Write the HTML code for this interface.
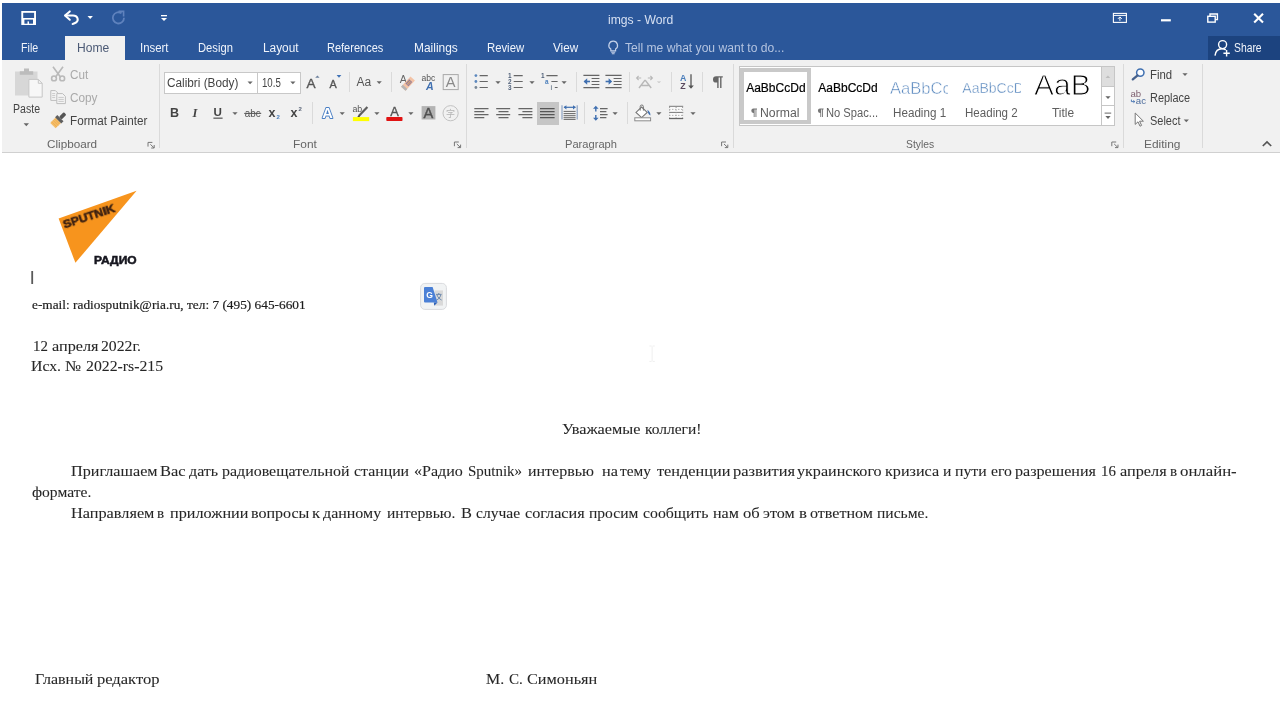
<!DOCTYPE html>
<html lang="ru">
<head>
<meta charset="utf-8">
<title>imgs - Word</title>
<style>
*{margin:0;padding:0;box-sizing:border-box}
html,body{width:1280px;height:719px;overflow:hidden;background:#fff}
body{position:relative;font-family:"Liberation Sans",sans-serif;font-size:12px;color:#444}
#titlebar{position:absolute;left:2px;top:3px;width:1278px;height:57px;background:#2b579a}
#share{position:absolute;left:1208px;top:36px;width:72px;height:24px;background:#1c437f}
#ribbon{position:absolute;left:2px;top:60px;width:1278px;height:93px;background:#f1f1f1;border-bottom:1px solid #d0d0d0}
#hometab{position:absolute;left:64.5px;top:36px;width:60.2px;height:25px;background:#f1f1f1}
.tab{position:absolute;top:41px;color:#fff;font-size:12px;line-height:14px;white-space:nowrap;transform-origin:0 50%}
.t{position:absolute;white-space:nowrap;line-height:14px;font-size:12px;color:#444;transform-origin:0 50%}
.dis{color:#a9a9a9}
.gl{color:#666}
.gal{color:#5e5e5e}
.doc{position:absolute;white-space:pre;font-family:"Liberation Serif",serif;color:#262626;font-size:16px;line-height:18px;-webkit-text-stroke:0.08px #262626}
#root{position:absolute;left:0;top:0;width:1280px;height:719px;will-change:transform;overflow:hidden}
.w{position:absolute;top:0;white-space:pre;transform-origin:0 14.4px}
svg{position:absolute;left:0;top:0;overflow:visible}
.box{position:absolute;background:#fff;border:1px solid #c8c8c8}
</style>
</head>
<body>
<div id="root">
<div id="titlebar"></div>
<div id="share"></div>
<div id="hometab"></div>
<div id="ribbon"></div>
<!-- title + tabs -->
<div class="tab" id="wtitle" style="left:607.6px;top:12.6px;color:#d6e0f2;transform:scaleX(1.012)">imgs - Word</div>
<div class="tab" id="tFile" style="left:21.4px;top:41px;color:#f0f4fb;transform:scaleX(0.890)">File</div>
<div class="tab" id="tHome" style="left:77.4px;top:41px;color:#4c5a75;transform:scaleX(1.006)">Home</div>
<div class="tab" id="tInsert" style="left:139.5px;top:41px;color:#f0f4fb;transform:scaleX(0.950)">Insert</div>
<div class="tab" id="tDesign" style="left:197.6px;top:41px;color:#f0f4fb;transform:scaleX(0.934)">Design</div>
<div class="tab" id="tLayout" style="left:262.5px;top:41px;color:#f0f4fb;transform:scaleX(0.988)">Layout</div>
<div class="tab" id="tRef" style="left:327.3px;top:41px;color:#f0f4fb;transform:scaleX(0.917)">References</div>
<div class="tab" id="tMail" style="left:413.6px;top:41px;color:#f0f4fb;transform:scaleX(0.995)">Mailings</div>
<div class="tab" id="tReview" style="left:487.4px;top:41px;color:#f0f4fb;transform:scaleX(0.943)">Review</div>
<div class="tab" id="tView" style="left:553.0px;top:41px;color:#f0f4fb;transform:scaleX(0.973)">View</div>
<div class="tab" id="tTell" style="left:625.0px;top:41px;color:#b4c4e0;transform:scaleX(1.008)">Tell me what you want to do...</div>
<div class="tab" id="tShare" style="left:1234.1px;top:41px;color:#f0f4fb;transform:scaleX(0.862)">Share</div>
<!-- boxes & separators -->
<div class="box" style="left:164px;top:72px;width:94px;height:22px"></div>
<div class="box" style="left:257px;top:72px;width:44px;height:22px"></div>
<div class="box" id="gallery" style="left:739px;top:66px;width:376px;height:60px;border-color:#c6c6c6"></div>
<div style="position:absolute;left:740px;top:68px;width:71px;height:56px;border:4px solid #c9c9c9;background:#fff"></div>
<div style="position:absolute;left:1101px;top:67px;width:13px;height:20px;background:#dedede;border-left:1px solid #c6c6c6;border-bottom:1px solid #c6c6c6"></div>
<div style="position:absolute;left:1101px;top:87px;width:13px;height:19px;border-left:1px solid #c6c6c6;border-bottom:1px solid #c6c6c6"></div>
<div style="position:absolute;left:1101px;top:106px;width:13px;height:19px;border-left:1px solid #c6c6c6"></div>
<div style="position:absolute;left:537px;top:102px;width:22px;height:23px;background:#c6c6c6"></div>
<!-- separators -->
<div style="position:absolute;left:158.5px;top:64px;width:1px;height:84px;background:#dadada"></div>
<div style="position:absolute;left:465.5px;top:64px;width:1px;height:84px;background:#dadada"></div>
<div style="position:absolute;left:733px;top:64px;width:1px;height:84px;background:#dadada"></div>
<div style="position:absolute;left:1123px;top:64px;width:1px;height:84px;background:#dadada"></div>
<div style="position:absolute;left:1201.5px;top:64px;width:1px;height:84px;background:#dadada"></div>
<div style="position:absolute;left:348.5px;top:72px;width:1px;height:20px;background:#dadada"></div>
<div style="position:absolute;left:390.5px;top:72px;width:1px;height:20px;background:#dadada"></div>
<div style="position:absolute;left:575.5px;top:72px;width:1px;height:20px;background:#dadada"></div>
<div style="position:absolute;left:628.5px;top:72px;width:1px;height:20px;background:#dadada"></div>
<div style="position:absolute;left:670.5px;top:72px;width:1px;height:20px;background:#dadada"></div>
<div style="position:absolute;left:701.5px;top:72px;width:1px;height:20px;background:#dadada"></div>
<div style="position:absolute;left:311.5px;top:102px;width:1px;height:22px;background:#dadada"></div>
<div style="position:absolute;left:584px;top:102px;width:1px;height:22px;background:#dadada"></div>
<div style="position:absolute;left:626.5px;top:102px;width:1px;height:22px;background:#dadada"></div>
<!-- ribbon text -->
<div class="t " style="left:13.0px;top:102px;transform:scaleX(0.880)">Paste</div>
<div class="t dis" style="left:70.0px;top:67.5px;transform:scaleX(0.975)">Cut</div>
<div class="t dis" style="left:70.0px;top:90.6px;transform:scaleX(0.982)">Copy</div>
<div class="t " style="left:70.0px;top:113.5px;transform:scaleX(0.974)">Format Painter</div>
<div class="t gl" style="left:46.9px;top:136.7px;font-size:11px;transform:scaleX(1.064)">Clipboard</div>
<div class="t " style="left:166.9px;top:76px;transform:scaleX(0.981)">Calibri (Body)</div>
<div class="t " style="left:261.7px;top:76px;transform:scaleX(0.805)">10.5</div>
<div class="t gl" style="left:293.0px;top:136.7px;font-size:11px;transform:scaleX(1.081)">Font</div>
<div class="t gl" style="left:564.8px;top:136.7px;font-size:11px;transform:scaleX(1.012)">Paragraph</div>
<div class="t gl" style="left:906.0px;top:136.7px;font-size:11px;transform:scaleX(0.938)">Styles</div>
<div class="t gl" style="left:1143.8px;top:136.7px;font-size:11px;transform:scaleX(1.085)">Editing</div>
<div class="t " style="left:1150.1px;top:67.5px;transform:scaleX(0.947)">Find</div>
<div class="t " style="left:1150.1px;top:91px;transform:scaleX(0.911)">Replace</div>
<div class="t " style="left:1150.1px;top:113.5px;transform:scaleX(0.914)">Select</div>
<div class="t gal" style="left:759.8px;top:106px;transform:scaleX(1.019)">Normal</div>
<div class="t gal" style="left:825.9px;top:106px;transform:scaleX(0.930)">No Spac...</div>
<div class="t gal" style="left:892.7px;top:106px;transform:scaleX(0.971)">Heading 1</div>
<div class="t gal" style="left:965.1px;top:106px;transform:scaleX(0.963)">Heading 2</div>
<div class="t gal" style="left:1052.0px;top:106px;transform:scaleX(0.994)">Title</div>
<!-- styles gallery samples -->
<div class="t" style="left:746.2px;top:81px;color:#000;font-size:12px;-webkit-text-stroke:0.2px #000">AaBbCcDd</div>
<div class="t" style="left:818.3px;top:81px;color:#000;font-size:12px;-webkit-text-stroke:0.2px #000">AaBbCcDd</div>
<div style="position:absolute;left:888px;top:74px;width:60.2px;height:26px;overflow:hidden"><div class="t" style="left:2px;top:5.4px;font-size:16.6px;line-height:20px;color:#5585bd;-webkit-text-stroke:0.5px #fff">AaBbCc</div></div>
<div style="position:absolute;left:960px;top:74px;width:60.6px;height:26px;overflow:hidden"><div class="t" style="left:2.3px;top:5px;font-size:14px;line-height:18px;color:#5585bd;-webkit-text-stroke:0.4px #fff">AaBbCcDd</div></div>
<div style="position:absolute;left:1030px;top:74.8px;width:62px;height:26px;overflow:hidden"><div class="t" style="left:4.2px;top:-6.3px;font-size:30.2px;line-height:32px;color:#000;-webkit-text-stroke:1px #fff;transform:scaleX(0.992)">AaB</div></div>
<!-- icons: title bar -->
<svg width="1280" height="719" viewBox="0 0 1280 719">
<!-- save -->
<rect x="21.3" y="11" width="14.7" height="14" fill="#fff"/>
<rect x="23.2" y="12.8" width="10.9" height="5.2" fill="#2b579a"/>
<rect x="24.4" y="19.6" width="8.6" height="4.1" fill="#2b579a"/>
<rect x="27.5" y="21.4" width="1.5" height="3.6" fill="#fff"/>
<!-- undo -->
<path d="M65.5 15.6H73C77.8 15.6 79 20.3 76.2 22.4C75 23.3 74 23.7 72.6 24" fill="none" stroke="#fff" stroke-width="2" stroke-linecap="round"/>
<path d="M69.8 11.4L65 15.6L69.8 19.8" fill="none" stroke="#fff" stroke-width="2" stroke-linecap="round" stroke-linejoin="round"/>
<path d="M87.5 16h5.4l-2.7 3z" fill="#fff"/>
<!-- redo (disabled) -->
<path d="M121.5 13.2A5.6 5.6 0 1 0 124 17.8" fill="none" stroke="#5f82bd" stroke-width="1.8"/>
<path d="M118.6 11.4h5v5" fill="none" stroke="#5f82bd" stroke-width="1.6"/>
<!-- qat customize -->
<rect x="161" y="15" width="6" height="1.3" fill="#fff"/>
<path d="M161 18h6l-3 3z" fill="#fff"/>
<!-- lightbulb -->
<path d="M613.2 41.2a4.3 4.3 0 0 0-2.4 7.9v1.7h4.8v-1.7a4.3 4.3 0 0 0-2.4-7.9z" fill="none" stroke="#c3d0e8" stroke-width="1.2"/>
<path d="M611.2 52.2h4M611.8 53.8h2.8" stroke="#c3d0e8" stroke-width="1.1" fill="none"/>
<!-- ribbon display options -->
<rect x="1113.4" y="13.4" width="13" height="9" fill="none" stroke="#fff" stroke-width="1.1"/>
<path d="M1113.4 15.4h13" stroke="#fff" stroke-width="1"/>
<path d="M1119.9 20.8v-3.6M1118 18.8l1.9-1.9l1.9 1.9" stroke="#fff" stroke-width="1" fill="none"/>
<!-- minimize -->
<rect x="1161" y="19.2" width="9.8" height="2.2" fill="#fff"/>
<!-- restore -->
<rect x="1207.8" y="16.3" width="7.4" height="5.8" fill="none" stroke="#fff" stroke-width="1.4"/>
<path d="M1210 16v-2h7.4v5.6h-2" fill="none" stroke="#fff" stroke-width="1.4"/>
<!-- close -->
<path d="M1254.2 13.8l8.8 8.8M1263 13.8l-8.8 8.8" stroke="#fff" stroke-width="2.1"/>
<!-- share person -->
<circle cx="1222.6" cy="44.6" r="4" fill="none" stroke="#fff" stroke-width="1.4"/>
<path d="M1215 55.6c0.6-4.6 3.4-6.8 7-6.8c1.6 0 2.8 0.4 3.8 1" fill="none" stroke="#fff" stroke-width="1.4"/>
<path d="M1226.6 50v6.4M1223.4 53.2h6.4" stroke="#fff" stroke-width="1.4"/>
<!-- collapse ribbon -->
<path d="M1262.8 146l4.2-4l4.2 4" fill="none" stroke="#555" stroke-width="1.7"/>
</svg>
<!-- icons: clipboard -->
<svg width="1280" height="719" viewBox="0 0 1280 719">
<!-- paste (disabled) -->
<rect x="15" y="71.5" width="22.5" height="24" fill="#d7d7d7"/>
<path d="M19.8 74.8v-3.6h4.2v-2.8h5v2.8h4.2v3.6z" fill="#bcbcbc"/>
<path d="M28.9 79.4h9.4l3.9 3.9v13.8h-13.3z" fill="#f7f7f7" stroke="#c6c6c6" stroke-width="1"/>
<path d="M38.3 79.4v3.9h3.9" fill="none" stroke="#c6c6c6" stroke-width="1"/>
<path d="M23.6 123.3h5.4l-2.7 3z" fill="#666"/>
<!-- cut (disabled) -->
<g fill="none" stroke="#b9b9b9" stroke-width="1.6">
<path d="M53 66.8l7.6 10.4M63 66.8l-7.6 10.4"/>
<circle cx="54" cy="78.4" r="2.4"/>
<circle cx="62.2" cy="78.4" r="2.4"/>
</g>
<!-- copy (disabled) -->
<g fill="#f4f4f4" stroke="#bdbdbd" stroke-width="1">
<path d="M50.8 90.6h4.6l2.4 2.4v7.4h-7z"/>
<path d="M56.8 93.6h5.8l2.8 2.8v7.2h-8.6z"/>
</g>
<path d="M52.2 93.6h3M52.2 95.6h3M52.2 97.6h3M58.4 97.4h5.4M58.4 99.4h5.4M58.4 101.4h5.4" stroke="#c4c4c4" stroke-width="0.9"/>
<!-- format painter -->
<g transform="rotate(-45 58.5 120)">
<rect x="50.6" y="116.2" width="7.6" height="7.6" fill="#f4bd68"/>
<path d="M52.4 116.2v7.6M54.4 116.2v7.6M56.4 116.2v7.6" stroke="#eaa548" stroke-width="0.6"/>
<rect x="58" y="115.6" width="3.2" height="8.8" fill="#5f5f5f"/>
<rect x="61.2" y="118.2" width="6.6" height="3.6" rx="1" fill="#555"/>
</g>
<!-- launcher clipboard -->
<g id="launcher" fill="none" stroke="#777" stroke-width="1">
<path d="M148 146.6v-4.2h4.4"/>
<path d="M150.4 144.4l3.6 3.4M154.2 145v3h-3"/>
</g>
<use href="#launcher" x="306.4" y="-0.4"/>
<use href="#launcher" x="573.6" y="-0.4"/>
<use href="#launcher" x="963.8" y="-0.4"/>
</svg>
<!-- icons: font group -->
<svg width="1280" height="719" viewBox="0 0 1280 719" font-family="Liberation Sans, sans-serif">
<defs><path id="dd" d="M0 0h5.2l-2.6 2.8z" fill="#666"/></defs>
<use href="#dd" x="247.5" y="81.4"/>
<use href="#dd" x="290.3" y="81.4"/>
<!-- B I U abc x2 x2 -->
<text x="170" y="116.8" font-size="12.5" font-weight="bold" fill="#444">B</text>
<text x="192.6" y="116.8" font-size="12.5" font-style="italic" font-weight="bold" font-family="Liberation Serif, serif" fill="#444">I</text>
<text x="213.6" y="116.2" font-size="11.6" font-weight="bold" fill="#444">U</text>
<rect x="213.4" y="117.6" width="9.2" height="1.1" fill="#444"/>
<use href="#dd" x="232.4" y="112.2"/>
<text x="244.8" y="116.6" font-size="10.4" fill="#555" textLength="15.8" lengthAdjust="spacingAndGlyphs">abc</text>
<rect x="244.2" y="112.9" width="17" height="1" fill="#555"/>
<text x="268.6" y="116.8" font-size="12.5" font-weight="bold" fill="#444">x</text>
<text x="276.4" y="118.8" font-size="6" font-weight="bold" fill="#4a7ebb">2</text>
<text x="290.6" y="116.8" font-size="12.5" font-weight="bold" fill="#444">x</text>
<text x="298.4" y="111.4" font-size="6" font-weight="bold" fill="#5a6478">2</text>
<!-- grow / shrink -->
<text x="306.4" y="87.9" font-size="13.6" fill="#555" stroke="#555" stroke-width="0.35">A</text>
<path d="M315.2 77.8l2.2-2.4l2.2 2.4z" fill="#6b7f9c"/>
<text x="329.6" y="87.9" font-size="10.8" fill="#555" stroke="#555" stroke-width="0.35">A</text>
<path d="M336.6 75.1h4.8l-2.4 2.6z" fill="#3f72b6"/>
<!-- Aa -->
<text x="356.6" y="86" font-size="12" fill="#555">Aa</text>
<use href="#dd" x="376.6" y="81.2"/>
<!-- clear formatting -->
<text x="399.8" y="82.8" font-size="10.6" fill="#666">A</text>
<g transform="rotate(-48 408 83.6)">
<rect x="401" y="80.6" width="14" height="6" fill="#f3c3a6"/>
<rect x="401" y="80.6" width="2.6" height="6" fill="#b5b5b5"/>
<rect x="406.4" y="81.6" width="5.6" height="4" fill="#8d7aa3"/>
<path d="M407.8 81.6v4M409.2 81.6v4M410.6 81.6v4M406.4 83.6h5.6" stroke="#f0b060" stroke-width="0.6"/>
</g>
<!-- phonetic guide -->
<text x="421.4" y="80.8" font-size="8.6" fill="#555" textLength="13.8" lengthAdjust="spacingAndGlyphs">abc</text>
<text x="426" y="89.8" font-size="10.6" font-weight="bold" font-style="italic" fill="#3f6fb0">A</text>
<!-- char border -->
<rect x="443.2" y="74.6" width="15" height="15" fill="none" stroke="#a8a8a8" stroke-width="1"/>
<text x="445.7" y="87" font-size="14.6" fill="#8a8a8a">A</text>
<!-- text effects -->
<text x="322.2" y="117.6" font-size="14.6" font-weight="bold" fill="#fff" stroke="#4a7fc4" stroke-width="1.9" stroke-linejoin="round" style="paint-order:stroke">A</text>
<use href="#dd" x="339.6" y="112.2"/>
<!-- highlight -->
<text x="352.4" y="111.6" font-size="8.8" fill="#555">ab</text>
<path d="M367.4 107l-8.6 9" stroke="#5e5e5e" stroke-width="2.2"/>
<path d="M359.4 114.8l-2.2 2.2h2.6z" fill="#444"/>
<rect x="352.9" y="117.1" width="16.3" height="4" fill="#ffff00"/>
<use href="#dd" x="374.3" y="112.2"/>
<!-- font colour -->
<text x="390.2" y="116.4" font-size="12.8" fill="#555" stroke="#555" stroke-width="0.35">A</text>
<rect x="386.3" y="117" width="16.2" height="4.1" rx="0.8" fill="#e01313"/>
<use href="#dd" x="408.3" y="112.2"/>
<!-- char shading -->
<rect x="421.6" y="106.1" width="13.8" height="13.4" fill="#b3b3b3"/>
<text x="423.6" y="117.9" font-size="14.6" fill="#505050" stroke="#505050" stroke-width="0.4">A</text>
<!-- enclosed char (disabled) -->
<circle cx="450.6" cy="113.2" r="7.6" fill="none" stroke="#c2c2c2" stroke-width="1"/>
<text x="446.1" y="116.8" font-size="9" fill="#b5b5b5" font-family="Noto Sans CJK SC, WenQuanYi Zen Hei, sans-serif">字</text>
</svg>
<!-- icons: paragraph group -->
<svg width="1280" height="719" viewBox="0 0 1280 719" font-family="Liberation Sans, sans-serif">
<!-- bullets -->
<g fill="#5c88be"><circle cx="475.9" cy="75.6" r="1.4"/><circle cx="475.9" cy="81.5" r="1.4"/><circle cx="475.9" cy="87.5" r="1.4" fill="#7a8896"/></g>
<path d="M479.6 75.6h8.2M479.6 81.5h8.2M479.6 87.5h8.2" stroke="#666" stroke-width="1.2"/>
<use href="#dd" x="495.4" y="81.2"/>
<!-- numbering -->
<g font-size="6.4" font-weight="bold" fill="#4f5f78"><text x="508" y="78">1</text><text x="508" y="83.9">2</text><text x="508" y="89.8">3</text></g>
<path d="M513.7 75.6h9M513.7 81.5h9M513.7 87.5h9" stroke="#666" stroke-width="1.2"/>
<use href="#dd" x="529.4" y="81.2"/>
<!-- multilevel -->
<g font-size="6.4" font-weight="bold"><text x="541" y="78" fill="#4f5f78">1</text><text x="545" y="83.9" fill="#4a7ebb">a</text><text x="550.4" y="89.8" fill="#7a8896">i</text></g>
<path d="M546.4 75.6h11.2M551.4 81.5h6.2M554.8 87.5h2.8" stroke="#666" stroke-width="1.2"/>
<use href="#dd" x="561.5" y="81.2"/>
<!-- decrease indent -->
<path d="M583.4 75.4h16M591.6 78.5h7.8M591.6 81.5h7.8M591.6 84.5h7.8M583.4 87.6h16" stroke="#666" stroke-width="1.2"/>
<path d="M590 81.5h-5.4" stroke="#3f6fb0" stroke-width="1.6"/><path d="M587.2 78.3l-3.6 3.2l3.6 3.2z" fill="#3f6fb0"/>
<!-- increase indent -->
<path d="M605.4 75.4h16.2M613.6 78.5h8M613.6 81.5h8M613.6 84.5h8M605.4 87.6h16.2" stroke="#666" stroke-width="1.2"/>
<path d="M605.6 81.5h5" stroke="#3f6fb0" stroke-width="1.6"/><path d="M608.6 78.3l3.6 3.2l-3.6 3.2z" fill="#3f6fb0"/>
<!-- asian layout (disabled) -->
<g stroke="#b8b8b8" fill="none">
<path d="M639 88l5.8-7.6h0.6l5.8 7.6M641.6 85.4h7" stroke-width="1.5"/>
<path d="M636.6 78h4.6M638.6 76l-2 2l2 2M652.4 78h-4.6M650.4 76l2 2l-2 2" stroke-width="1.1"/>
</g>
<path d="M656.8 81.4h4.4l-2.2 1.6z" fill="#c4c4c4"/>
<!-- sort -->
<text x="680" y="80.6" font-size="8.8" font-weight="bold" fill="#4a7ebb">A</text>
<text x="680.2" y="88.8" font-size="8.8" font-weight="bold" fill="#5a4a5e">Z</text>
<path d="M691 74.2v13.6" stroke="#555" stroke-width="1.3"/><path d="M688.2 85.6l2.8 3.2l2.8-3.2z" fill="#555"/>
<!-- pilcrow -->
<path d="M716.2 76.2h6.6v1.3h-1.3v10.5h-1.4v-10.5h-1.5v10.5h-1.4v-5.4h-1a3.2 3.2 0 0 1 0-6.4z" fill="#666"/>
<!-- align left/center/right/justify -->
<path d="M474.3 108.6h14.2M474.3 111.6h10M474.3 114.6h14.2M474.3 117.6h10" stroke="#666" stroke-width="1.2"/>
<path d="M496.2 108.6h14M498.5 111.6h10M496.2 114.6h14M498.5 117.6h10" stroke="#666" stroke-width="1.2"/>
<path d="M518.4 108.6h14M522.4 111.6h10M518.4 114.6h14M522.4 117.6h10" stroke="#666" stroke-width="1.2"/>
<path d="M540 108.6h14.6M540 111.6h14.6M540 114.6h14.6M540 117.6h14.6" stroke="#555" stroke-width="1.2"/>
<!-- distributed -->
<path d="M562 105.2v14.4M577.2 105.2v14.4" stroke="#8ea3c4" stroke-width="1.2"/>
<path d="M564 107.3h11.4" stroke="#3f6fb0" stroke-width="1.2"/><path d="M566.4 105.2l-2.8 2.1l2.8 2.1zM573 105.2l2.8 2.1l-2.8 2.1z" fill="#3f6fb0"/>
<path d="M563.6 111.4h12M563.6 113.6h12M563.6 115.7h12M563.6 117.7h12M563.6 119.4h12" stroke="#666" stroke-width="1"/>
<!-- line spacing -->
<path d="M595.8 107v4.6M595.8 115v4.6" stroke="#3f6fb0" stroke-width="1.4"/>
<path d="M593 108.8l2.8-3l2.8 3zM593 117.8l2.8 3l2.8-3z" fill="#3f6fb0"/>
<path d="M600 108.6h7.6M600 111.6h6.4M600 114.6h7.6M600 117.6h6.4" stroke="#666" stroke-width="1.2"/>
<use href="#dd" x="612.5" y="112.2"/>
<!-- shading -->
<path d="M641.6 107l5.6 5.4l-5.6 5.2l-5.6-5.2z" fill="#fff" stroke="#777" stroke-width="1.1"/>
<path d="M640.2 110.6v-4a1.6 1.6 0 0 1 3.2 0v4" fill="none" stroke="#777" stroke-width="1"/>
<path d="M647.4 109.8c2 1.4 3.2 3.4 3 5.8c-1.6-0.6-2.6-2.4-3-5.8z" fill="#3f6fb0"/>
<rect x="634.8" y="117.8" width="15.8" height="3" fill="#fff" stroke="#8a8a8a" stroke-width="1"/>
<use href="#dd" x="656.3" y="112.2"/>
<!-- borders -->
<rect x="669" y="105.8" width="14" height="13" fill="#fafafa"/>
<path d="M669 106.3h14.2M669 112.4h14.2" stroke="#777" stroke-width="1"/><path d="M669 118.5h14.2" stroke="#666" stroke-width="1.3"/>
<path d="M669.6 107v11M676.1 107v11M682.6 107v11" stroke="#999" stroke-width="1" stroke-dasharray="1 1.6"/>
<path d="M669 109.4h14M669 115.4h14" stroke="#aaa" stroke-width="0.9" stroke-dasharray="1.4 1.6"/>
<use href="#dd" x="690.4" y="112.2"/>
</svg>
<!-- icons: styles + editing -->
<svg width="1280" height="719" viewBox="0 0 1280 719" font-family="Liberation Sans, sans-serif">
<!-- pilcrows in gallery -->
<path id="pil" d="M753.6 108.6h3.4v0.9h-0.6v7.6h-0.9v-7.6h-0.9v7.6h-0.9v-4.2h-0.4a2.1 2.1 0 0 1 0.3-4.3z" fill="#777"/>
<use href="#pil" x="66.6"/>
<!-- gallery scroll arrows -->
<path d="M1105.6 78h4.6l-2.3-2.4z" fill="#bdbdbd"/>
<path d="M1105.4 96.2h5.2l-2.6 2.8z" fill="#666"/>
<rect x="1104.6" y="112.6" width="6.6" height="1" fill="#666"/>
<path d="M1105.4 116.1h5.2l-2.6 2.8z" fill="#666"/>
<!-- find -->
<circle cx="1140.3" cy="72.6" r="3.7" fill="#fafcff" stroke="#3f6fb0" stroke-width="1.5"/>
<path d="M1137.6 75.4l-4.8 4" stroke="#46618c" stroke-width="2.3" stroke-linecap="round"/>
<use href="#dd" x="1182.4" y="73.3"/>
<!-- replace -->
<text x="1130.4" y="97" font-size="9.6" fill="#7e6070">ab</text>
<text x="1135.8" y="103.9" font-size="9.6" fill="#4a6a9a">ac</text>
<path d="M1131.4 99.6v2h3.2M1133.4 100.4l1.4 1.2l-1.4 1.2" fill="none" stroke="#3f6fb0" stroke-width="0.9"/>
<!-- select -->
<path d="M1135.2 113v11.4l2.8-2.6l2 4.4l1.6-0.8l-2-4.2h3.8z" fill="#fff" stroke="#777" stroke-width="1" stroke-linejoin="round"/>
<use href="#dd" x="1183.7" y="119.4"/>
</svg>
<!-- document graphics: logo, caret, translate badge -->
<svg width="1280" height="719" viewBox="0 0 1280 719" font-family="Liberation Sans, sans-serif">
<path d="M136.6 190.8L58.6 218.6L75.4 262.8z" fill="#f7941d"/>
<g transform="translate(64.6 228.5) rotate(-18.4)"><text x="0" y="0" font-size="10.4" font-weight="bold" fill="#3a1f10" stroke="#3a1f10" stroke-width="0.55" textLength="54" lengthAdjust="spacingAndGlyphs">SPUTNIK</text></g>
<text x="94" y="264" font-size="10.4" font-weight="bold" fill="#16161f" stroke="#16161f" stroke-width="0.5" textLength="42.6" lengthAdjust="spacingAndGlyphs">РАДИО</text>
<rect x="31.3" y="271" width="1.8" height="13" fill="#5a5a5a"/>
<path d="M649.4 346h2.2M652.6 346h2.2M652.1 346.4v14.6M649.4 361.4h2.2M652.6 361.4h2.2" stroke="#efefef" stroke-width="1" fill="none"/>
<!-- translate badge -->
<rect x="420.6" y="283.4" width="25.8" height="26" rx="4.2" fill="#f1f3f4" stroke="#d9dbde" stroke-width="1"/>
<rect x="434.6" y="290.4" width="8.4" height="15.2" fill="#d9d9d9"/>
<path d="M436 294.4h5.6M438.8 293v1.4M437 295c0.8 2.2 2.4 4 4.6 5M440.8 295c-0.6 2.4-2.2 4.2-4.6 5.2" fill="none" stroke="#5f7fa8" stroke-width="0.9"/>
<path d="M424 288a1 1 0 0 1 1-1h7.6l4.9 15.5h-12.5a1 1 0 0 1-1-1z" fill="#4b80d6"/>
<path d="M433.8 302.5h3.7l-3.3 3.3z" fill="#2f62b8"/>
<text x="426.3" y="298.2" font-size="8.6" font-weight="bold" fill="#fff">G</text>
</svg>
<!-- DOCUMENT TEXT -->
<div class="doc" id="d1" style="left:32.2px;top:297px;font-size:13.33px;line-height:16px;color:#1c1c1c;-webkit-text-stroke:0.2px #1c1c1c;transform-origin:0 12.6px;transform:scale(0.9991,0.96)">e-mail: radiosputnik@ria.ru, тел: 7 (495) 645-6601</div>
<div class="doc" id="d5" style="left:0;top:461.6px;width:1280px;height:18px">
<span class="w" style="left:71.0px;transform:scale(1.011,0.96)">Приглашаем</span>
<span class="w" style="left:159.9px;transform:scale(1.026,0.96)">Вас</span>
<span class="w" style="left:189.2px;transform:scale(0.999,0.96)">дать</span>
<span class="w" style="left:222.0px;transform:scale(0.997,0.96)">радиовещательной</span>
<span class="w" style="left:354.2px;transform:scale(0.990,0.96)">станции</span>
<span class="w" style="left:414.0px;transform:scale(1.004,0.96)">«Радио</span>
<span class="w" style="left:467.6px;transform:scale(0.936,0.96)">Sputnik»</span>
<span class="w" style="left:528.3px;transform:scale(0.998,0.96)">интервью</span>
<span class="w" style="left:601.5px;transform:scale(1.016,0.96)">на</span>
<span class="w" style="left:619.6px;transform:scale(0.958,0.96)">тему</span>
<span class="w" style="left:657.0px;transform:scale(1.018,0.96)">тенденции</span>
<span class="w" style="left:733.3px;transform:scale(1.028,0.96)">развития</span>
<span class="w" style="left:797.0px;transform:scale(1.005,0.96)">украинского</span>
<span class="w" style="left:885.0px;transform:scale(1.010,0.96)">кризиса</span>
<span class="w" style="left:943.3px;transform:scale(0.979,0.96)">и</span>
<span class="w" style="left:955.1px;transform:scale(0.985,0.96)">пути</span>
<span class="w" style="left:990.8px;transform:scale(0.982,0.96)">его</span>
<span class="w" style="left:1014.5px;transform:scale(1.006,0.96)">разрешения</span>
<span class="w" style="left:1101.1px;transform:scale(0.930,0.96)">16</span>
<span class="w" style="left:1120.0px;transform:scale(1.017,0.96)">апреля</span>
<span class="w" style="left:1169.6px;transform:scale(0.939,0.96)">в</span>
<span class="w" style="left:1180.0px;transform:scale(1.048,0.96)">онлайн-</span>
</div>
<div class="doc" id="d6" style="left:0;top:482.6px;width:1280px;height:18px">
<span class="w" style="left:31.7px;transform:scale(0.973,0.96)">формате.</span>
</div>
<div class="doc" id="d7" style="left:0;top:503.6px;width:1280px;height:18px">
<span class="w" style="left:70.8px;transform:scale(1.017,0.96)">Направляем</span>
<span class="w" style="left:157.1px;transform:scale(0.939,0.96)">в</span>
<span class="w" style="left:169.5px;transform:scale(1.012,0.96)">приложнии</span>
<span class="w" style="left:250.8px;transform:scale(1.002,0.96)">вопросы</span>
<span class="w" style="left:312.2px;transform:scale(1.050,0.96)">к</span>
<span class="w" style="left:323.3px;transform:scale(0.999,0.96)">данному</span>
<span class="w" style="left:387.1px;transform:scale(0.977,0.96)">интервью.</span>
<span class="w" style="left:460.8px;transform:scale(1.023,0.96)">В</span>
<span class="w" style="left:475.8px;transform:scale(0.973,0.96)">случае</span>
<span class="w" style="left:524.5px;transform:scale(1.012,0.96)">согласия</span>
<span class="w" style="left:589.1px;transform:scale(0.973,0.96)">просим</span>
<span class="w" style="left:642.6px;transform:scale(0.985,0.96)">сообщить</span>
<span class="w" style="left:713.3px;transform:scale(1.004,0.96)">нам</span>
<span class="w" style="left:742.5px;transform:scale(1.033,0.96)">об</span>
<span class="w" style="left:763.3px;transform:scale(1.006,0.96)">этом</span>
<span class="w" style="left:798.5px;transform:scale(1.050,0.96)">в</span>
<span class="w" style="left:810.0px;transform:scale(1.003,0.96)">ответном</span>
<span class="w" style="left:877.1px;transform:scale(0.974,0.96)">письме.</span>
</div>
<div class="doc" id="d2" style="left:0;top:336.5px;width:1280px;height:18px">
<span class="w" style="left:32.8px;transform:scale(0.930,0.96)">12</span>
<span class="w" style="left:51.6px;transform:scale(1.014,0.96)">апреля</span>
<span class="w" style="left:101.3px;transform:scale(0.982,0.96)">2022г.</span>
</div>
<div class="doc" id="d3" style="left:0;top:357.4px;width:1280px;height:18px">
<span class="w" style="left:31.3px;transform:scale(0.987,0.96)">Исх.</span>
<span class="w" style="left:65.0px;transform:scale(1.050,0.96)">№</span>
<span class="w" style="left:85.5px;transform:scale(0.986,0.96)">2022-rs-215</span>
</div>
<div class="doc" id="d4" style="left:0;top:419.6px;width:1280px;height:18px">
<span class="w" style="left:562.4px;transform:scale(1.017,0.96)">Уважаемые</span>
<span class="w" style="left:645.1px;transform:scale(0.967,0.96)">коллеги!</span>
</div>
<div class="doc" id="d8" style="left:0;top:669.6px;width:1280px;height:18px">
<span class="w" style="left:35.1px;transform:scale(0.997,0.96)">Главный</span>
<span class="w" style="left:97.0px;transform:scale(1.032,0.96)">редактор</span>
</div>
<div class="doc" id="d9" style="left:0;top:669.6px;width:1280px;height:18px">
<span class="w" style="left:485.8px;transform:scale(0.996,0.96)">М.</span>
<span class="w" style="left:508.6px;transform:scale(0.944,0.96)">С.</span>
<span class="w" style="left:527.0px;transform:scale(1.017,0.96)">Симоньян</span>
</div>
</div>
</body>
</html>
